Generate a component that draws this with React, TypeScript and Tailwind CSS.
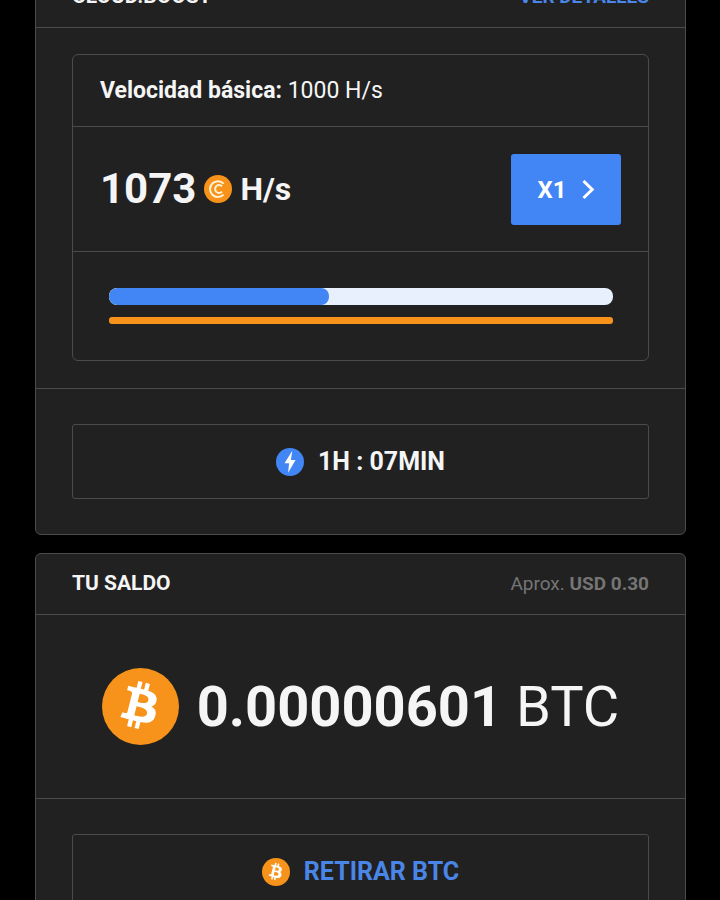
import type { ReactNode } from "react";

const SPEED_PROGRESS = 43.7;

function BitcoinIcon({ className }: { className: string }) {
  return (
    <svg viewBox="0 0 32 32" className={className} aria-hidden="true">
      <circle cx="16" cy="16" r="16" fill="#f7931a" />
      <path
        fill="#fff"
        transform="translate(-0.5 -0.6)"
        d="M23.189 14.02c.314-2.096-1.283-3.223-3.465-3.975l.708-2.84-1.728-.43-.69 2.765c-.454-.114-.92-.22-1.385-.326l.695-2.783L15.596 6l-.708 2.839c-.376-.086-.746-.17-1.104-.26l.002-.009-2.384-.595-.46 1.846s1.283.294 1.256.312c.7.175.826.638.805 1.006l-.806 3.235c.048.012.11.03.18.057l-.183-.045-1.13 4.532c-.086.212-.303.531-.793.41.018.025-1.256-.313-1.256-.313l-.858 1.978 2.25.561c.418.105.828.215 1.231.318l-.715 2.872 1.727.43.708-2.84c.472.127.93.245 1.378.357l-.706 2.828 1.728.43.715-2.866c2.948.558 5.164.333 6.097-2.333.752-2.146-.037-3.385-1.588-4.192 1.13-.26 1.98-1.003 2.207-2.538zm-3.95 5.538c-.533 2.147-4.148.986-5.32.695l.95-3.805c1.172.293 4.929.872 4.37 3.11zm.535-5.569c-.487 1.953-3.495.96-4.47.717l.86-3.45c.975.243 4.118.696 3.61 2.733z"
      />
    </svg>
  );
}

function CoinIcon({ className }: { className: string }) {
  return (
    <svg viewBox="0 0 28 28" className={className} aria-hidden="true">
      <circle cx="14" cy="14" r="14" fill="#f7931a" />
      <g fill="none" stroke="#fff3d6" strokeWidth="2">
        <path d="M19.6 8.6A7.9 7.9 0 1 0 19.6 19.6" />
        <path d="M18 11.2A4 4 0 1 0 18 16.8" />
      </g>
    </svg>
  );
}

function BoltIcon({ className }: { className: string }) {
  return (
    <svg viewBox="0 0 28 28" className={className} aria-hidden="true">
      <circle cx="14" cy="14" r="14" fill="#4285f4" />
      <path fill="#fff" d="M16.3 2.8 8.5 15.2h4.6l-1 9.6L19.6 12h-4.7z" />
    </svg>
  );
}

function Card({
  title,
  action,
  children,
}: {
  title: string;
  action: ReactNode;
  children: ReactNode;
}) {
  return (
    <section className="rounded-md border border-[#4b4b4b] bg-[#212121]">
      <header className="flex h-[61px] items-baseline justify-between border-b border-[#4b4b4b] px-9 pt-[17px]">
        <h2 className="text-[21px] leading-6 font-bold">{title}</h2>
        {action}
      </header>
      {children}
    </section>
  );
}

export default function App() {
  return (
    <div className="h-screen overflow-hidden bg-black font-[Roboto,sans-serif] text-[#f5f5f5]">
      <main className="-mt-[34px] space-y-[18px] pr-[34px] pl-[35px]">
        <Card
          title="CLOUD.BOOST"
          action={
            <a href="#details" className="text-[19px] leading-6 font-bold text-[#4a86e8]">
              VER DETALLES
            </a>
          }
        >
          <div className="border-b border-[#4b4b4b] px-9 pt-[26px] pb-[27px]">
            <div className="rounded-md border border-[#4b4b4b]">
              <p className="border-b border-[#4b4b4b] px-[27px] py-5 text-[23px] leading-[31px]">
                <strong className="font-bold">Velocidad básica:</strong> 1000 H/s
              </p>
              <div className="flex items-center justify-between border-b border-[#4b4b4b] px-[27px] pt-[27px] pb-[26px]">
                <div className="flex items-center pb-0.5 font-bold">
                  <span className="text-[42px] leading-12">1073</span>
                  <CoinIcon className="ml-2 size-7" />
                  <span className="ml-2 text-[32px] leading-10">H/s</span>
                </div>
                <button
                  type="button"
                  className="flex h-[71px] w-[110px] items-center justify-center gap-[15px] rounded-[3px] bg-[#4285f4] text-2xl font-bold text-white"
                >
                  X1
                  <svg
                    viewBox="0 0 13 20"
                    className="h-5 w-[13px]"
                    fill="none"
                    stroke="currentColor"
                    strokeWidth="3"
                    aria-hidden="true"
                  >
                    <path d="M1.5 1l8.7 8.5-8.7 8.5" />
                  </svg>
                </button>
              </div>
              <div className="space-y-3 py-9 pr-[35px] pl-9">
                <div className="h-[17px] overflow-hidden rounded-lg bg-[#e8f0fe]">
                  <div
                    className="h-full rounded-lg bg-[#4285f4]"
                    style={{ width: `${SPEED_PROGRESS}%` }}
                  />
                </div>
                <div className="h-[7px] rounded-[3px] bg-[#f7931a]" />
              </div>
            </div>
          </div>
          <div className="px-9 py-[35px]">
            <div className="flex h-[75px] items-center justify-center gap-[14px] rounded-[3px] border border-[#4b4b4b] text-[25px] font-bold">
              <BoltIcon className="size-7" />
              <span>1H : 07MIN</span>
            </div>
          </div>
        </Card>

        <Card
          title="TU SALDO"
          action={
            <p className="text-[19px] leading-6 text-[#757575]">
              Aprox. <strong className="font-bold">USD 0.30</strong>
            </p>
          }
        >
          <div className="flex items-center justify-center gap-[18px] border-b border-[#4b4b4b] py-[53px]">
            <BitcoinIcon className="size-[77px]" />
            <p className="text-[56px] leading-[62px]">
              <strong className="font-bold">0.00000601</strong> BTC
            </p>
          </div>
          <div className="px-9 py-[35px]">
            <button
              type="button"
              className="flex h-[75px] w-full items-center justify-center gap-[14px] rounded-[3px] border border-[#4b4b4b] text-[25px] font-bold text-[#4a86e8]"
            >
              <BitcoinIcon className="size-7" />
              <span>RETIRAR BTC</span>
            </button>
          </div>
        </Card>
      </main>
    </div>
  );
}
